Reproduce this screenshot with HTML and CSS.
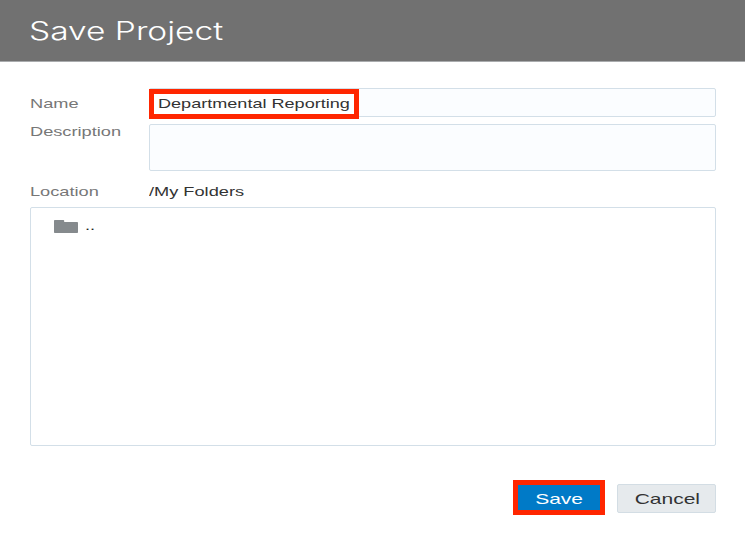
FILE: index.html
```html
<!DOCTYPE html>
<html lang="en">
<head>
<meta charset="utf-8">
<title>Save Project</title>
<link rel="stylesheet" href="styles.css">
</head>
<body>
<div class="dialog">
  <header class="header"><h1 class="title wide">Save Project</h1></header>
  <main class="content">
    <div class="row row-name">
      <span class="label"><span class="wide">Name</span></span>
      <div class="field field-name">
        <div class="mark"><span class="wide value">Departmental Reporting</span></div>
      </div>
    </div>
    <div class="row row-description">
      <span class="label"><span class="wide">Description</span></span>
      <div class="field"></div>
    </div>
    <div class="row row-location">
      <span class="label"><span class="wide">Location</span></span>
      <span class="path"><span class="wide">/My Folders</span></span>
    </div>
    <div class="list">
      <div class="item">
        <svg class="folder" viewBox="0 0 24 13"><path d="M0 .8Q0 0 .8 0H9.4Q10.2 0 10.2 .8V2H23.2Q24 2 24 2.8V12.2Q24 13 23.2 13H.8Q0 13 0 12.2Z" fill="#858a8d"/></svg>
        <span class="wide dots">..</span>
      </div>
    </div>
  </main>
  <footer class="footer">
    <div class="mark mark-save"><span class="wide">Save</span></div>
    <div class="button"><span class="wide">Cancel</span></div>
  </footer>
</div>
</body>
</html>
```
FILE: styles.css
```css
* { box-sizing: border-box; }
body {
  margin: 0;
  background: #fff;
  font-family: "Liberation Sans", Arial, sans-serif;
  font-size: 13px;
  color: #333;
}
.dialog { width: 745px; height: 533px; display: flex; flex-direction: column; }
.wide { display: inline-block; white-space: nowrap; transform: scaleX(1.4); transform-origin: left center; }
.header {
  height: 62px;
  flex: none;
  display: flex;
  align-items: center;
  padding-left: 29px;
  background: #717171;
  border-bottom: 1px solid #a9abad;
}
.title { margin: 0; font: 300 25px/30px Inter, sans-serif; color: #fff; transform: scaleX(1.34); }
.content { padding: 26px 29px 0 30px; }
.row { display: grid; grid-template-columns: 119px 1fr; }
.row-name { height: 36px; }
.row-description { height: 55px; }
.row-location { height: 28px; }
.label { color: #777; line-height: 15px; }
.row-name .label { padding-top: 8px; }
.field { background: #fbfdff; border: 1px solid #d3dfe8; border-radius: 2px; height: 47px; }
.field-name { height: 29px; }
.mark {
  width: 210px;
  height: 30px;
  margin: 0 0 0 -1px;
  padding: 0 0 2px 4px;
  border: 5px solid #ff2600;
  display: flex;
  align-items: center;
  background: #fff;
}
.value { transform: scaleX(1.39); }
.row-location .label, .path { line-height: 15px; padding-top: 5px; }
.list { height: 239px; border: 1px solid #d3dfe8; border-radius: 2px; padding: 11px 23px; }
.item { display: flex; align-items: center; gap: 7px; height: 15px; }
.folder { width: 24px; height: 13px; }
.dots { position: relative; top: -1px; color: #222; }
.footer { display: flex; justify-content: flex-end; align-items: flex-start; gap: 12px; padding: 34px 29px 0 0; font-size: 15px; }
.footer .wide { transform-origin: center; }
.mark-save { width: 92px; height: 35px; padding: 2px 0 0; margin: 0; justify-content: center; background: #007ac7; color: #fff; }
.button {
  width: 99px;
  height: 29px;
  margin-top: 4px;
  padding-left: 2px;
  display: flex;
  align-items: center;
  justify-content: center;
  border: 1px solid #d3dde4;
  border-radius: 2px;
  background: #e6eaed;
}
```
